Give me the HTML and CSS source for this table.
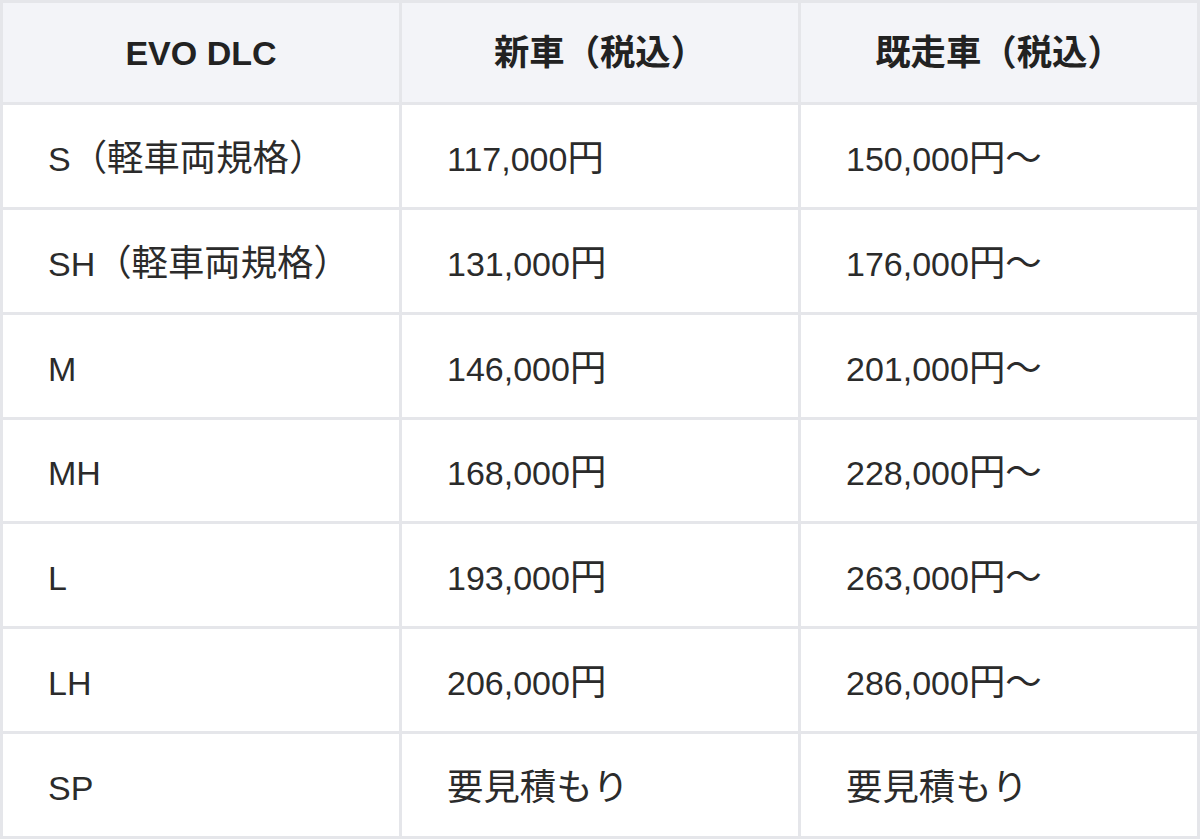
FILE: index.html
```html
<!DOCTYPE html>
<html lang="ja">
<head>
<meta charset="utf-8">
<link rel="stylesheet" href="styles.css">
</head>
<body>
<table class="price">
  <thead>
    <tr><th>EVO DLC</th><th><span class="ja">新車（税込）</span></th><th><span class="ja">既走車（税込）</span></th></tr>
  </thead>
  <tbody>
    <tr><td>S<span class="ja">（軽車両規格）</span></td><td>117,000<span class="ja">円</span></td><td>150,000<span class="ja">円〜</span></td></tr>
    <tr><td>SH<span class="ja">（軽車両規格）</span></td><td>131,000<span class="ja">円</span></td><td>176,000<span class="ja">円〜</span></td></tr>
    <tr><td>M</td><td>146,000<span class="ja">円</span></td><td>201,000<span class="ja">円〜</span></td></tr>
    <tr><td>MH</td><td>168,000<span class="ja">円</span></td><td>228,000<span class="ja">円〜</span></td></tr>
    <tr><td>L</td><td>193,000<span class="ja">円</span></td><td>263,000<span class="ja">円〜</span></td></tr>
    <tr><td>LH</td><td>206,000<span class="ja">円</span></td><td>286,000<span class="ja">円〜</span></td></tr>
    <tr><td>SP</td><td><span class="ja">要見積もり</span></td><td><span class="ja">要見積もり</span></td></tr>
  </tbody>
</table>
</body>
</html>
```
FILE: styles.css
```css
html, body {
  margin: 0;
  padding: 0;
  background: #ffffff;
}
.price {
  width: 1200px;
  height: 839px;
  border-collapse: collapse;
  table-layout: fixed;
  font-family: "Liberation Sans", "Noto Sans CJK JP", sans-serif;
  font-size: 34px;
  line-height: 48px;
  color: #2b2b2b;
}
.price th, .price td {
  border: 3px solid #e5e6ea;
  height: 99px;
  padding: 0 0 0 45px;
  text-align: left;
  vertical-align: middle;
  font-weight: 400;
}
.price td {
  height: 93px;
  padding-top: 6px;
}
.price th {
  background: #f3f4f8;
  text-align: center;
  padding: 0;
  font-weight: 700;
  color: #222;
}
.ja {
  font-size: 1.07em;
  line-height: 1;
}
.price th .ja {
  font-size: 1.04em;
}
```
